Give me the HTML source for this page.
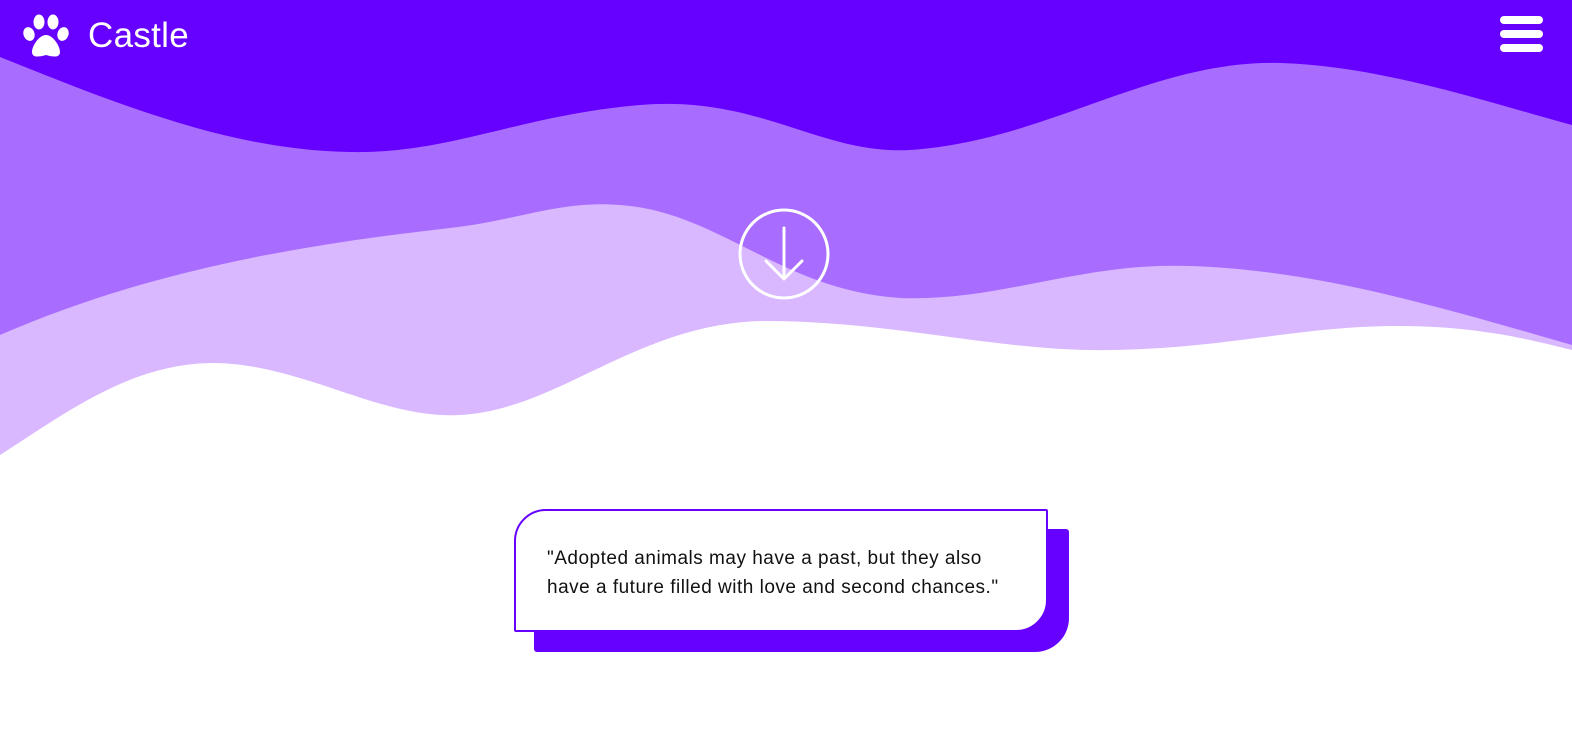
<!DOCTYPE html>
<html><head><style>
html,body{margin:0;padding:0;width:1572px;height:740px;overflow:hidden;background:#fff;font-family:"Liberation Sans",sans-serif;}
svg.bg{position:absolute;left:0;top:0;}
.logo{position:absolute;left:22px;top:14px;display:flex;align-items:center;color:#fff;font-size:35px;}
.logo span{margin-left:18px;letter-spacing:0.3px;}
.menu{position:absolute;left:1500px;top:16px;width:43px;}
.menu div{height:8px;background:#fff;border-radius:4px;margin-bottom:6px;}
.shadow{position:absolute;left:534px;top:529px;width:535px;height:123px;background:#6600ff;border-radius:3px 3px 34px 3px;}
.card{position:absolute;left:514px;top:509px;width:530px;height:119px;background:#fff;border:2px solid #6600ff;border-radius:32px 2px 32px 2px;}
.card p{margin:0;position:absolute;left:31px;top:33px;font-size:19px;letter-spacing:0.5px;line-height:29px;color:#111;width:480px;}
</style></head><body>
<svg class="bg" width="1572" height="740" viewBox="0 0 1572 740">
<rect width="1572" height="500" fill="#6600ff"/>
<path d="M0,57 C120,105 230,150 350,152 C450,154 520,115 640,105 C760,95 820,155 910,150 C1050,140 1150,60 1280,63 C1380,66 1480,100 1572,125 L1572,500 L0,500Z" fill="#a86dff"/>
<path d="M0,335 C150,270 300,245 450,228 C520,220 560,200 620,205 C720,212 780,290 900,298 C1000,302 1080,262 1190,266 C1320,270 1450,310 1572,345 L1572,500 L0,500Z" fill="#d9b8ff"/>
<path d="M0,455 C70,410 130,365 210,363 C300,362 380,420 460,415 C560,410 640,320 770,321 C900,322 1000,352 1110,350 C1250,348 1320,318 1450,328 C1510,333 1550,345 1572,350 L1572,740 L0,740Z" fill="#fff"/>
<circle cx="784" cy="254" r="44" fill="none" stroke="#fff" stroke-width="3"/>
<path d="M784,228 V278 M766,261 L784,279 L802,261" fill="none" stroke="#fff" stroke-width="3" stroke-linecap="round" stroke-linejoin="round"/>
</svg>
<div class="logo">
<svg width="48" height="44" viewBox="0 0 48 44">
<ellipse cx="7" cy="20" rx="5.5" ry="7" fill="#fff" transform="rotate(-20 7 20)"/>
<ellipse cx="17" cy="8" rx="5.5" ry="7.5" fill="#fff"/>
<ellipse cx="31" cy="8" rx="5.5" ry="7.5" fill="#fff"/>
<ellipse cx="41" cy="20" rx="5.5" ry="7" fill="#fff" transform="rotate(20 41 20)"/>
<path d="M24,21 C17,21 10,32 10,38 C10,44 17,43 24,41 C31,43 38,44 38,38 C38,32 31,21 24,21Z" fill="#fff"/>
</svg>
<span>Castle</span></div>
<div class="menu"><div></div><div></div><div></div></div>
<div class="shadow"></div>
<div class="card"><p>"Adopted animals may have a past, but they also have a future filled with love and second chances."</p></div>
</body></html>
